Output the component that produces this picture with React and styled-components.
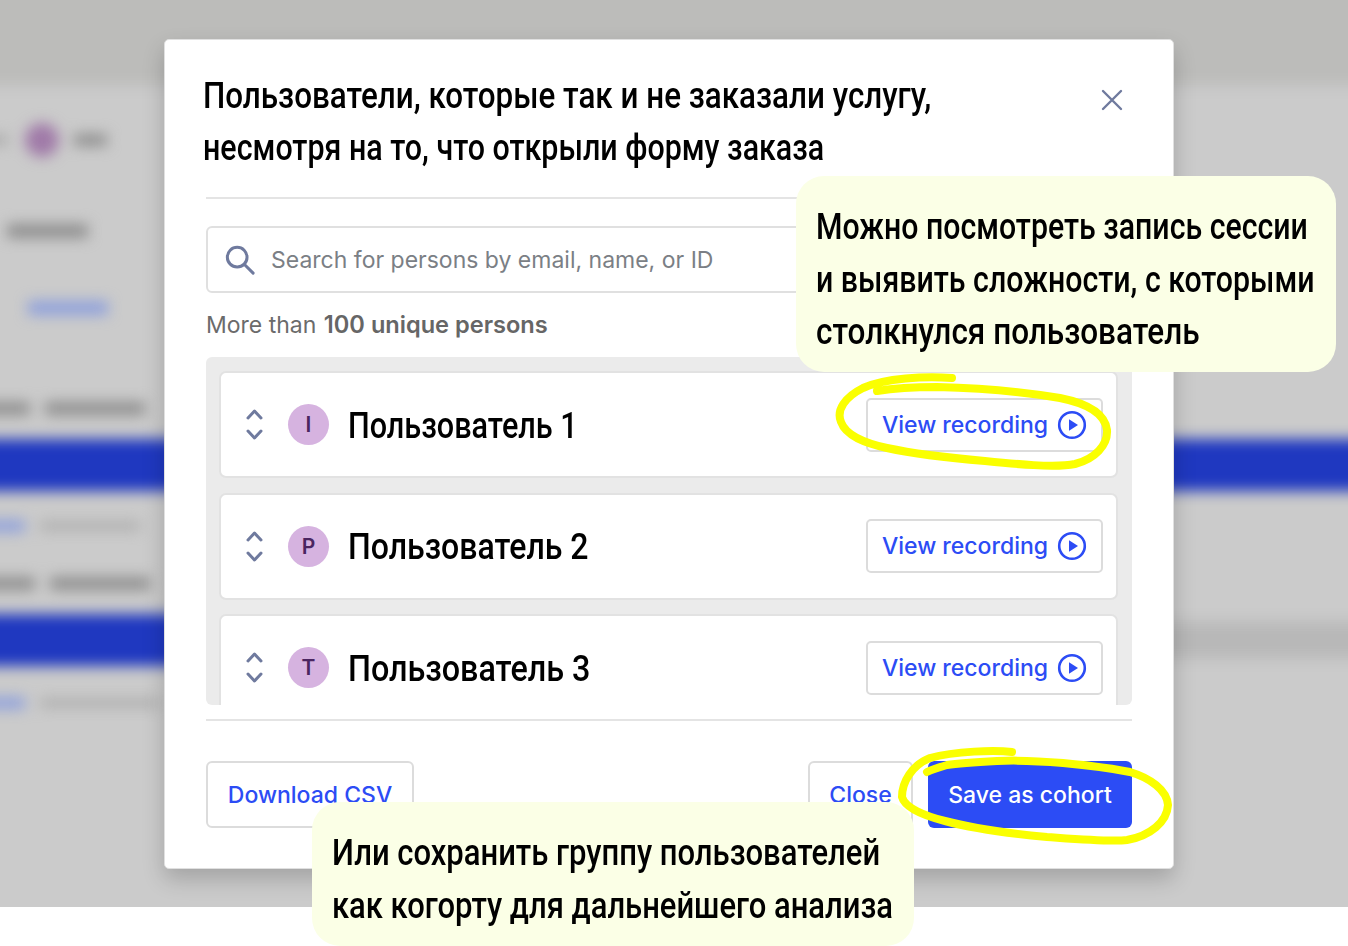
import React from 'react';
import styled, { createGlobalStyle } from 'styled-components';

const hand = `Roboto, "DejaVu Sans Condensed", sans-serif`;
const ui = `Inter, "Liberation Sans", sans-serif`;

const GlobalStyle = createGlobalStyle`
  html, body { margin: 0; padding: 0; background: #fff; }
  #root { width: 1348px; height: 946px; }
`;

const Page = styled.div`
  position: relative;
  width: 1348px;
  height: 946px;
  overflow: hidden;
  background: #fff;
`;

// Размытая страница за модальным окном
const Backdrop = styled.div`
  height: 907px;
  overflow: hidden;
  background: #cbcbcb;
`;

// шире страницы на 30px, чтобы размытие не гасло у краёв
const BlurLayer = styled.div`
  display: flex;
  flex-direction: column;
  margin: -30px;
  filter: blur(7px);
`;

const TopBand = styled.div`
  height: 115px;
  flex: none;
  background: #bcbcba;
`;

const BlurRow = styled.div`
  display: flex;
  align-items: center;
  gap: ${(p) => p.$gap || 15}px;
  flex: none;
  height: ${(p) => p.$h}px;
  margin-top: ${(p) => p.$mt || 0}px;
  padding-left: ${(p) => p.$pl || 0}px;
`;

const BlurDot = styled.div`
  width: 34px;
  height: 34px;
  margin-left: 2px;
  border-radius: 50%;
  background: #a07aa8;
`;

const BlurText = styled.div`
  flex: ${(p) => (p.$w ? 'none' : 1)};
  width: ${(p) => p.$w}px;
  height: ${(p) => p.$th || 12}px;
  background: ${(p) => p.$c || '#8e8e8e'};
`;

const Modal = styled.div`
  position: absolute;
  left: 164px;
  top: 39px;
  width: 1010px;
  height: 830px;
  box-sizing: border-box;
  padding: 30px 41px 0;
  display: flex;
  flex-direction: column;
  background: #fff;
  border: 1px solid #e0e0e0;
  border-radius: 5px;
  box-shadow: 0 10px 22px rgba(0, 0, 0, 0.2);
`;

const Header = styled.div`
  display: flex;
  justify-content: space-between;
  align-items: flex-start;
  height: 127px;
  flex: none;
  border-bottom: 2px solid #e4e4e4;
`;

// Рукописного шрифта нет: узкая высокая строка через scaleX
const HandLine = styled.span`
  display: block;
  width: max-content;
  font-family: ${hand};
  font-weight: 500;
  font-size: 36px;
  color: #000;
  white-space: nowrap;
  transform: scaleX(${(p) => p.$sx});
  transform-origin: left center;
`;

const Title = styled.h2`
  margin: 0 0 0 -3px;
  font-weight: 500;
  line-height: 52px;
`;

const CloseIcon = styled.button`
  display: flex;
  margin: 19px 9px 0 0;
  padding: 0;
  border: 0;
  background: none;
  color: #6f7a9e;
`;

const SearchBox = styled.div`
  display: flex;
  flex: none;
  align-items: center;
  gap: 16px;
  height: 67px;
  box-sizing: border-box;
  margin-top: 27px;
  padding-left: 17px;
  border: 2px solid #e0e0e0;
  border-radius: 6px;
  color: #6f7a9e;
`;

const SearchText = styled.span`
  font-family: ${ui};
  font-size: 23px;
  color: #7b7f85;
`;

const Count = styled.div`
  flex: none;
  margin-top: 16px;
  height: 48px;
  font-family: ${ui};
  font-size: 23px;
  line-height: 32px;
  color: #6b6b6b;

  b {
    margin-left: 1px;
    font-size: 23.6px;
    font-weight: 600;
    color: #666;
  }
`;

const ListPanel = styled.div`
  flex: none;
  height: 348px;
  box-sizing: border-box;
  padding: 14px 14px 0 13px;
  display: flex;
  flex-direction: column;
  gap: 14.5px;
  overflow: hidden;
  background: #ebebeb;
  border-radius: 6px;
`;

const PersonCard = styled.div`
  flex: none;
  display: flex;
  align-items: center;
  height: 107px;
  box-sizing: border-box;
  padding: 0 13px 0 22px;
  background: #fff;
  border: 2px solid #e2e2e2;
  border-radius: 7px;
`;

const Sorter = styled.div`
  display: flex;
  flex-direction: column;
  align-items: center;
  gap: 9px;
  width: 22px;
  color: #6f7a9e;
`;

const Avatar = styled.div`
  width: 41px;
  height: 41px;
  margin-left: 23px;
  display: flex;
  flex: none;
  align-items: center;
  justify-content: center;
  border-radius: 50%;
  background: #d6b3e0;
  color: #4a2560;
  font-family: ${ui};
  font-size: 21px;
  font-weight: 600;
`;

const PersonName = styled.div`
  flex: 1;
  margin: 2px 0 0 19px;
`;

const RecordingButton = styled.button`
  display: flex;
  align-items: center;
  justify-content: center;
  gap: 9px;
  width: 237px;
  height: 54px;
  padding: 0;
  background: #fff;
  border: 2px solid #dcdcdc;
  border-radius: 5px;
  color: #2c4cf5;
  font-family: ${ui};
  font-size: 23px;
  font-weight: 500;
`;

const Footer = styled.div`
  display: flex;
  flex: none;
  align-items: flex-start;
  margin-top: 14px;
  padding-top: 40px;
  border-top: 2px solid #e4e4e4;
  gap: 15px;
`;

const FooterButton = styled.button`
  width: ${(p) => p.$w}px;
  height: 67px;
  padding: 0;
  border-radius: 6px;
  border: ${(p) => (p.$primary ? '0' : '2px solid #dcdcdc')};
  background: ${(p) => (p.$primary ? '#2c4cf5' : '#fff')};
  color: ${(p) => (p.$primary ? '#fff' : '#2c4cf5')};
  font-family: ${ui};
  font-size: 23px;
  font-weight: 500;
  white-space: nowrap;
`;

const Spacer = styled.div`
  flex: 1;
`;

const Callout = styled.div`
  position: absolute;
  left: ${(p) => p.$left}px;
  top: ${(p) => p.$top}px;
  width: ${(p) => p.$w}px;
  height: ${(p) => p.$h}px;
  box-sizing: border-box;
  padding: 25px 20px;
  background: #fbffe6;
  border-radius: 28px;
  line-height: 52.5px;
  overflow: hidden;
`;

const Scribble = styled.svg`
  position: absolute;
  left: 0;
  top: 0;
  pointer-events: none;
`;

const Chevron = ({ up }) => (
  <svg width="17" height="11" viewBox="0 0 17 11" fill="none" stroke="currentColor" strokeWidth="3" strokeLinecap="round" strokeLinejoin="round">
    <path d={up ? 'M2 9l6.5-7L15 9' : 'M2 2l6.5 7L15 2'} />
  </svg>
);

const PlayCircle = () => (
  <svg width="30" height="30" viewBox="0 0 30 30" fill="none">
    <circle cx="15" cy="15" r="12.8" stroke="currentColor" strokeWidth="2.6" />
    <path d="M12 9.3v11.4l9-5.7z" fill="currentColor" />
  </svg>
);

const persons = [
  { letter: 'I', name: 'Пользователь 1', sx: 0.85 },
  { letter: 'P', name: 'Пользователь 2', sx: 0.89 },
  { letter: 'T', name: 'Пользователь 3', sx: 0.897 },
];

export default function App() {
  return (
    <Page>
      <GlobalStyle />
      <Backdrop>
        <BlurLayer>
          <TopBand />
          <BlurRow $h={34} $mt={38}>
            <BlurText $w={38} $th={10} $c="#aaa" />
            <BlurDot />
            <BlurText $w={33} />
          </BlurRow>
          <BlurRow $h={20} $mt={64} $pl={37}>
            <BlurText $w={81} $th={14} />
          </BlurRow>
          <BlurRow $h={16} $mt={59} $pl={58}>
            <BlurText $w={80} $th={14} $c="#8ea0dc" />
          </BlurRow>
          <BlurRow $h={16} $mt={84}>
            <BlurText $w={60} $th={13} />
            <BlurText $w={100} $th={13} />
          </BlurRow>
          <BlurRow $h={52} $mt={23}>
            <BlurText $th={52} $c="#1f38c0" />
          </BlurRow>
          <BlurRow $h={12} $mt={29}>
            <BlurText $w={55} $c="#8ea0dc" />
            <BlurText $w={100} $th={8} $c="#aaa" />
          </BlurRow>
          <BlurRow $h={16} $mt={43}>
            <BlurText $w={65} $th={13} />
            <BlurText $w={100} $th={13} />
          </BlurRow>
          <BlurRow $h={52} $mt={23} $gap={0}>
            <BlurText $w={700} $th={52} $c="#1f38c0" />
            <BlurText $th={36} $c="#b8b8b8" />
          </BlurRow>
          <BlurRow $h={12} $mt={31}>
            <BlurText $w={55} $c="#8ea0dc" />
            <BlurText $w={120} $th={8} $c="#aaa" />
          </BlurRow>
          <BlurRow $h={240} />
        </BlurLayer>
      </Backdrop>

      <Modal>
        <Header>
          <Title>
            <HandLine $sx={0.872}>Пользователи, которые так и не заказали услугу,</HandLine>
            <HandLine $sx={0.845}>несмотря на то, что открыли форму заказа</HandLine>
          </Title>
          <CloseIcon>
            <svg width="22" height="22" viewBox="0 0 22 22" fill="none" stroke="currentColor" strokeWidth="2.4" strokeLinecap="round">
              <path d="M2 2l18 18M20 2L2 20" />
            </svg>
          </CloseIcon>
        </Header>
        <SearchBox>
          <svg width="30" height="30" viewBox="0 0 32 32" fill="none" stroke="currentColor" strokeWidth="3.2" strokeLinecap="round">
            <circle cx="13" cy="13" r="10.5" />
            <path d="M20.5 20.5L30 30" />
          </svg>
          <SearchText>Search for persons by email, name, or ID</SearchText>
        </SearchBox>
        <Count>
          More than <b>100 unique persons</b>
        </Count>
        <ListPanel>
          {persons.map((p) => (
            <PersonCard key={p.letter}>
              <Sorter>
                <Chevron up />
                <Chevron />
              </Sorter>
              <Avatar>{p.letter}</Avatar>
              <PersonName>
                <HandLine $sx={p.sx}>{p.name}</HandLine>
              </PersonName>
              <RecordingButton>
                View recording
                <PlayCircle />
              </RecordingButton>
            </PersonCard>
          ))}
        </ListPanel>
        <Footer>
          <FooterButton $w={208}>Download CSV</FooterButton>
          <Spacer />
          <FooterButton $w={105}>Close</FooterButton>
          <FooterButton $w={204} $primary>Save as cohort</FooterButton>
        </Footer>
      </Modal>

      <Callout $left={796} $top={176} $w={540} $h={196}>
        <HandLine $sx={0.841}>Можно посмотреть запись сессии</HandLine>
        <HandLine $sx={0.842}>и выявить сложности, с которыми</HandLine>
        <HandLine $sx={0.875}>столкнулся пользователь</HandLine>
      </Callout>
      <Callout $left={312} $top={802} $w={602} $h={144}>
        <HandLine $sx={0.861}>Или сохранить группу пользователей</HandLine>
        <HandLine $sx={0.86}>как когорту для дальнейшего анализа</HandLine>
      </Callout>

      <Scribble width="1348" height="946" fill="none" stroke="#faff00" strokeWidth="8" strokeLinecap="round" strokeLinejoin="round">
        <path d="M952 378C925 376 885 378 863 388C845 397 836 410 841 422C846 436 865 443 887 448C915 454 950 458 985 461C1015 464 1055 468 1075 464C1095 459 1108 445 1107 430C1105 413 1085 403 1060 398C1025 392 980 388 937 387C915 387 895 388 877 391" />
        <path d="M1012 752C995 750 955 751 930 758C912 765 902 782 902 797C905 808 925 816 945 821C975 829 1015 834 1047 837C1075 839 1110 842 1127 840C1150 836 1167 822 1168 805C1167 790 1150 778 1130 772C1110 768 1085 765 1063 763C1040 761 1018 760 997 761C978 762 960 763 947 765C940 767 933 769 927 772" />
      </Scribble>
    </Page>
  );
}
